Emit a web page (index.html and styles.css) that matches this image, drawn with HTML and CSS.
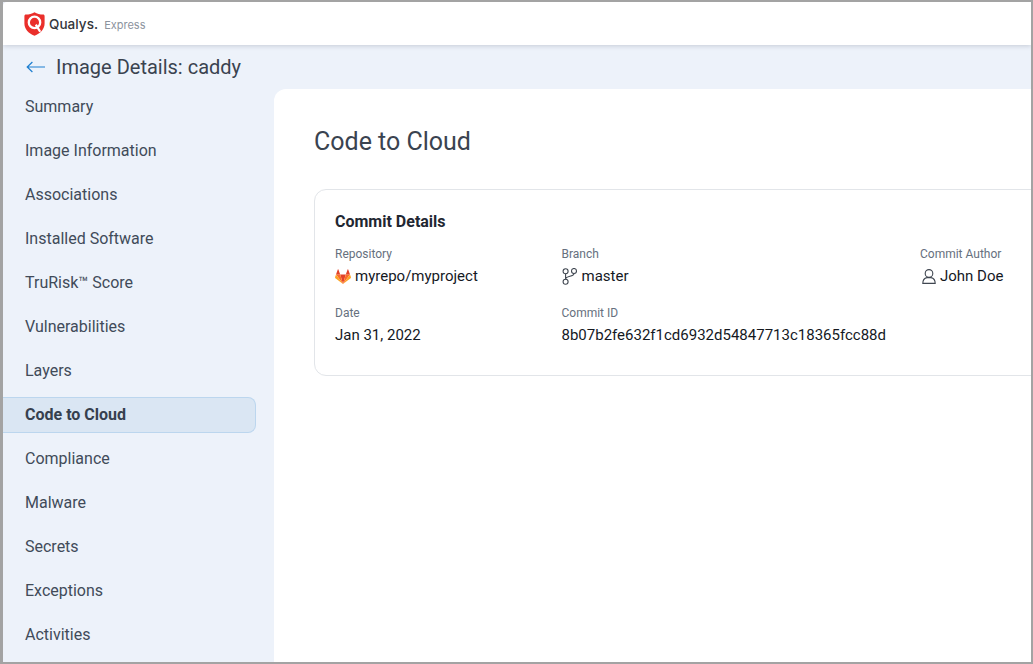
FILE: index.html
```html
<!DOCTYPE html>
<html lang="en">
<head>
<meta charset="utf-8">
<title>Image Details: caddy</title>
<link rel="stylesheet" href="styles.css">
</head>
<body>
<div class="frame">
  <header class="topbar">
    <svg class="logo" width="21" height="24" viewBox="0 0 21 24" aria-hidden="true">
      <path d="M10.5 0.3C8 1.8 5 2.6 2 2.6C1 2.6 0.4 3.2 0.4 4.2V11.5C0.4 17 4.2 21.2 10.5 23.7C16.8 21.2 20.6 17 20.6 11.5V4.2C20.6 3.2 20 2.6 19 2.6C16 2.6 13 1.8 10.5 0.3Z" fill="#ea2f2b"/>
      <circle cx="10.5" cy="10.4" r="5.7" fill="none" stroke="#fff" stroke-width="2.3"/>
      <path d="M11.8 12.6L16.2 19.8" stroke="#fff" stroke-width="2.2" fill="none"/>
    </svg>
    <span class="brand">Qualys.</span>
    <span class="edition">Express</span>
  </header>
  <div class="titlebar">
    <svg class="back" width="20" height="12" viewBox="0 0 20 12" aria-hidden="true">
      <path d="M19 6H1.2M6.4 1L1.2 6L6.4 11" fill="none" stroke="#1e7fd0" stroke-width="1.2"/>
    </svg>
    <h1 class="page-title">Image Details: caddy</h1>
  </div>
  <div class="content">
    <nav class="sidenav">
      <a class="nav-item">Summary</a>
      <a class="nav-item">Image Information</a>
      <a class="nav-item">Associations</a>
      <a class="nav-item">Installed Software</a>
      <a class="nav-item">TruRisk™ Score</a>
      <a class="nav-item">Vulnerabilities</a>
      <a class="nav-item">Layers</a>
      <a class="nav-item active">Code to Cloud</a>
      <a class="nav-item">Compliance</a>
      <a class="nav-item">Malware</a>
      <a class="nav-item">Secrets</a>
      <a class="nav-item">Exceptions</a>
      <a class="nav-item">Activities</a>
    </nav>
    <main class="panel">
      <h2 class="panel-title">Code to Cloud</h2>
      <section class="card">
        <h3 class="card-title">Commit Details</h3>
        <div class="details">
          <div class="field">
            <div class="label">Repository</div>
            <div class="value">
              <svg class="icon" width="16" height="15" viewBox="0 0 16 15" aria-hidden="true">
                <path d="M8 15L5.2 5.6H10.8Z" fill="#e24329"/>
                <path d="M8 15L5.2 5.6H1Z" fill="#fc6d26"/>
                <path d="M8 15L10.8 5.6H15Z" fill="#fc6d26"/>
                <path d="M1 5.6L2.8 0.4C2.9 0.1 3.3 0.1 3.4 0.4L5.2 5.6Z" fill="#e24329"/>
                <path d="M15 5.6L13.2 0.4C13.1 0.1 12.7 0.1 12.6 0.4L10.8 5.6Z" fill="#e24329"/>
                <path d="M1 5.6L0.1 8C0 8.5 0 8.9 0.4 9.2L8 15Z" fill="#fca326"/>
                <path d="M15 5.6L15.9 8C16 8.5 16 8.9 15.6 9.2L8 15Z" fill="#fca326"/>
              </svg>
              <span>myrepo/myproject</span>
            </div>
          </div>
          <div class="field">
            <div class="label">Branch</div>
            <div class="value">
              <svg class="icon" width="16" height="17" viewBox="0 0 16 17" aria-hidden="true">
                <g fill="none" stroke="#3f4650" stroke-width="1.1">
                  <circle cx="3.6" cy="3.3" r="2.5"/>
                  <circle cx="12" cy="3" r="2.5"/>
                  <circle cx="3.6" cy="13.8" r="2.5"/>
                  <path d="M3.6 5.8V11.3M12 5.5C12 9 3.6 7.6 3.6 11.3"/>
                </g>
              </svg>
              <span>master</span>
            </div>
          </div>
          <div class="field">
            <div class="label">Commit Author</div>
            <div class="value value-tight">
              <svg class="icon" width="14" height="15" viewBox="0 0 14 15" aria-hidden="true">
                <g fill="none" stroke="#3f4650" stroke-width="1.1">
                  <circle cx="7" cy="4.4" r="3.8"/>
                  <path d="M0.8 14.4C0.8 11 3 9 5 8.6H9C11 9 13.2 11 13.2 14.4Z"/>
                </g>
              </svg>
              <span>John Doe</span>
            </div>
          </div>
          <div class="field">
            <div class="label">Date</div>
            <div class="value">Jan 31, 2022</div>
          </div>
          <div class="field field-wide">
            <div class="label">Commit ID</div>
            <div class="value">8b07b2fe632f1cd6932d54847713c18365fcc88d</div>
          </div>
        </div>
      </section>
    </main>
  </div>
</div>
</body>
</html>
```

FILE: styles.css
```css
* { box-sizing: border-box; }
html, body { margin: 0; height: 100%; overflow: hidden; }
body {
  font-family: Roboto, "Liberation Sans", sans-serif;
  color: #1f2937;
  background: #a3a3a3;
}
.frame {
  height: 664px;
  border-style: solid;
  border-color: #a3a3a3;
  border-width: 2px 2px 2px 3px;
  background: #edf2fa;
  display: flex;
  flex-direction: column;
  overflow: hidden;
}
.topbar {
  height: 43px;
  flex: none;
  display: flex;
  align-items: center;
  padding-left: 21px;
  background: #fff;
  border-top-left-radius: 4px;
  box-shadow: 0 1px 5px rgba(60, 70, 90, 0.22);
  position: relative;
}
.logo { margin-right: 4px; margin-top: 1px; }
.brand {
  font-family: Inter, Lato, sans-serif;
  font-size: 13.5px;
  font-weight: 500;
  letter-spacing: 0.05px;
  color: #33363b;
}
.edition {
  font-family: Inter, "Open Sans", sans-serif;
  font-size: 11px;
  color: #8c939d;
  margin-left: 6px;
  margin-top: 2px;
}
.titlebar {
  height: 44px;
  flex: none;
  display: flex;
  align-items: center;
  padding-left: 23px;
}
.back { margin-right: 10px; margin-top: -1px; }
.page-title {
  margin: 0;
  font-size: 20px;
  font-weight: 400;
  color: #3a4350;
}
.content { flex: 1; display: flex; min-height: 0; }
.sidenav {
  width: 271px;
  flex: none;
  display: flex;
  flex-direction: column;
  gap: 8px;
  padding-right: 18px;
}
.nav-item {
  height: 36px;
  flex: none;
  display: flex;
  align-items: center;
  padding: 0 0 2px 22px;
  font-size: 16px;
  color: #414b59;
  border: 1px solid transparent;
  border-left: 0;
}
.nav-item.active {
  background: #dae6f3;
  border-color: #bcd6ee;
  border-radius: 0 8px 8px 0;
  font-weight: 700;
  color: #36404e;
}
.panel {
  flex: 1;
  min-width: 0;
  background: #fff;
  border-top-left-radius: 12px;
  padding: 38px 0 0 40px;
}
.panel-title {
  margin: 0;
  font-size: 25px;
  line-height: 30px;
  font-weight: 400;
  color: #3a4350;
}
.card {
  margin-top: 32px;
  width: 800px;
  height: 187px;
  border: 1px solid #e2e5e9;
  border-radius: 12px;
  padding: 22px 20px 0;
}
.card-title {
  margin: 0;
  font-size: 16px;
  line-height: 20px;
  font-weight: 700;
  color: #1f2732;
}
.details {
  display: grid;
  grid-template-columns: 226.5px 358.5px 1fr;
  row-gap: 19px;
  margin-top: 14px;
}
.field { min-width: 0; }
.field-wide { grid-column: span 2; }
.label {
  font-size: 12px;
  line-height: 16px;
  color: #66707e;
}
.value {
  display: flex;
  align-items: center;
  gap: 4px;
  height: 20px;
  margin-top: 4px;
  font-size: 15px;
  color: #15191f;
}
.value-tight { padding-left: 2px; }
.icon { flex: none; }
```
